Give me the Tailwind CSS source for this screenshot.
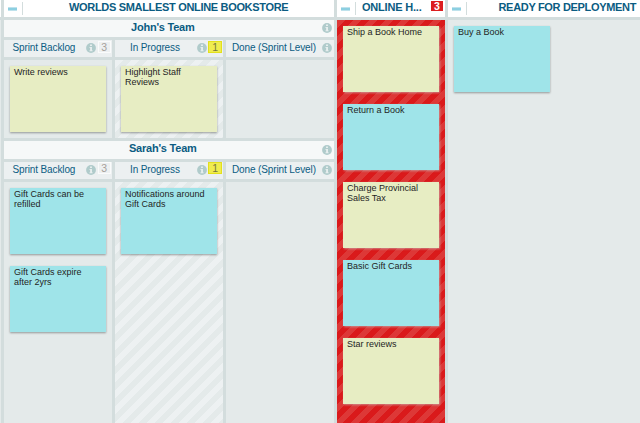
<!DOCTYPE html>
<html lang="en">
<head>
<meta charset="utf-8">
<title>Board</title>
<script src="https://cdn.jsdelivr.net/npm/@tailwindcss/browser@4"></script>
</head>
<body class="w-[640px] h-[423px] overflow-hidden bg-[#d3dddd] font-['Liberation_Sans',Arial,sans-serif] text-[#0b5c82]">
<svg width="0" height="0" class="absolute">
  <symbol id="info" viewBox="0 0 10 10">
    <circle cx="5" cy="5" r="4.9" fill="#b0cbcb"/>
    <path d="M4 1.6h2v1.4H4zM3.5 4h2.5v3.2h.6v1H3.5v-1h.6V5h-.6z" fill="#e6eeee"/>
  </symbol>
</svg>
<main class="flex h-full gap-[3px]">
  <div class="w-px shrink-0 flex flex-col gap-[3px]"><div class="h-[17px] bg-white"></div><div class="flex-1 bg-[#e4eaea]"></div></div>

  <section class="w-[330px] shrink-0 flex flex-col gap-[3px]">
    <header class="h-[17px] shrink-0 bg-white flex">
      <div class="w-[19px] h-[13px] mt-[2px] border-r border-[#d3dddd] pl-1 pt-[5px]"><div class="w-[9px] h-[4px] bg-[#8ccfe1] border-y border-[#bfe2ec]"></div></div>
      <h1 class="flex-1 pl-[46px] text-[11px] tracking-[-0.32px] leading-[15px] font-bold whitespace-nowrap">WORLDS SMALLEST ONLINE BOOKSTORE</h1>
    </header>

    <h2 class="h-[17px] shrink-0 bg-[#f6f8f8] flex items-start pl-[127px] pr-[2px] justify-between text-[11px] tracking-[-0.22px] leading-[15px] font-bold">John's Team<svg class="size-[10px] mt-[3px]"><use href="#info"/></svg></h2>
    <div class="h-[17px] shrink-0 grid grid-cols-3 gap-[3px] text-[10px] tracking-[-0.12px] leading-[16px] whitespace-nowrap">
      <div class="bg-[#ecf0f1] flex pl-[8.5px] pr-px"><span class="w-[73px]">Sprint Backlog</span><svg class="size-[10px] mt-[3px]"><use href="#info"/></svg><b class="ml-[2px] mt-px w-[13px] h-[12px] shrink-0 border border-[#fafbfb] bg-[#edf0f1] text-[#a5a09b] text-[10.5px] leading-[10px] text-center font-normal">3</b></div>
      <div class="bg-[#ecf0f1] flex pl-[15px]"><span class="w-[67px]">In Progress</span><svg class="size-[10px] mt-[3px]"><use href="#info"/></svg><b class="ml-px mt-px w-[14px] h-[12px] shrink-0 border border-[#e3e01c] bg-[#efec4e] text-[#77773f] text-[10.5px] leading-[10px] text-center font-normal">1</b></div>
      <div class="bg-[#ecf0f1] flex pl-[6px]"><span class="w-[90px]">Done (Sprint Level)</span><svg class="size-[10px] mt-[3px]"><use href="#info"/></svg></div>
    </div>
    <div class="h-[78px] shrink-0 grid grid-cols-3 gap-[3px] text-[9px] leading-[10px] text-[#242424]">
      <div class="bg-[#e4eaea] p-[6px]"><article class="w-[96px] h-[66px] bg-[#e7edc3] shadow-[0_1px_2px_#0000005c] px-1 pt-px">Write reviews</article></div>
      <div class="p-[6px] bg-[#e4eaea] bg-[linear-gradient(135deg,#edf1f2_25%,transparent_25%,transparent_50%,#edf1f2_50%,#edf1f2_75%,transparent_75%)] bg-[length:16px_16px]"><article class="w-[96px] h-[66px] bg-[#e7edc3] shadow-[0_1px_2px_#0000005c] px-1 pt-px">Highlight Staff<br>Reviews</article></div>
      <div class="bg-[#e4eaea]"></div>
    </div>

    <h2 class="h-[18px] shrink-0 bg-[#f6f8f8] flex items-start pl-[125px] pr-[2px] justify-between text-[11px] tracking-[-0.22px] leading-[15px] font-bold">Sarah's Team<svg class="size-[10px] mt-[4px]"><use href="#info"/></svg></h2>
    <div class="h-[17px] shrink-0 grid grid-cols-3 gap-[3px] text-[10px] tracking-[-0.12px] leading-[16px] whitespace-nowrap">
      <div class="bg-[#ecf0f1] flex pl-[8.5px] pr-px"><span class="w-[73px]">Sprint Backlog</span><svg class="size-[10px] mt-[3px]"><use href="#info"/></svg><b class="ml-[2px] w-[13px] h-[12px] shrink-0 border border-[#fafbfb] bg-[#edf0f1] text-[#a5a09b] text-[10.5px] leading-[10px] text-center font-normal">3</b></div>
      <div class="bg-[#ecf0f1] flex pl-[15px]"><span class="w-[67px]">In Progress</span><svg class="size-[10px] mt-[3px]"><use href="#info"/></svg><b class="ml-px w-[14px] h-[12px] shrink-0 border border-[#e3e01c] bg-[#efec4e] text-[#77773f] text-[10.5px] leading-[10px] text-center font-normal">1</b></div>
      <div class="bg-[#ecf0f1] flex pl-[6px]"><span class="w-[90px]">Done (Sprint Level)</span><svg class="size-[10px] mt-[3px]"><use href="#info"/></svg></div>
    </div>
    <div class="flex-1 grid grid-cols-3 gap-[3px] text-[9px] leading-[10px] text-[#242424]">
      <div class="bg-[#e4eaea] p-[6px] flex flex-col gap-3">
        <article class="w-[96px] h-[66px] bg-[#9fe4e9] shadow-[0_1px_2px_#0000005c] px-1 pt-px">Gift Cards can be<br>refilled</article>
        <article class="w-[96px] h-[66px] bg-[#9fe4e9] shadow-[0_1px_2px_#0000005c] px-1 pt-px">Gift Cards expire<br>after 2yrs</article>
      </div>
      <div class="p-[6px] bg-[#e4eaea] bg-[linear-gradient(135deg,#edf1f2_25%,transparent_25%,transparent_50%,#edf1f2_50%,#edf1f2_75%,transparent_75%)] bg-[length:16px_16px]"><article class="w-[96px] h-[66px] bg-[#9fe4e9] shadow-[0_1px_2px_#0000005c] px-1 pt-px">Notifications around<br>Gift Cards</article></div>
      <div class="bg-[#e4eaea]"></div>
    </div>
  </section>

  <section class="w-[108px] shrink-0 flex flex-col gap-[3px]">
    <header class="h-[17px] shrink-0 bg-white flex">
      <div class="w-[19px] h-[13px] mt-[2px] border-r border-[#d3dddd] pl-1 pt-[5px]"><div class="w-[9px] h-[4px] bg-[#8ccfe1] border-y border-[#bfe2ec]"></div></div>
      <h1 class="w-[75px] pl-[6px] text-[11px] tracking-[-0.2px] leading-[15px] font-bold whitespace-nowrap">ONLINE H...</h1>
      <b class="w-[12px] h-[10px] mt-px bg-[#dc1e20] text-white text-[10.5px] leading-[10px] text-center">3</b>
    </header>
    <div class="flex-1 p-[6px] flex flex-col gap-3 text-[9px] leading-[10px] text-[#242424] bg-[#da1a1b] bg-[linear-gradient(135deg,#dd3837_25%,transparent_25%,transparent_50%,#dd3837_50%,#dd3837_75%,transparent_75%)] bg-[length:16px_16px]">
      <article class="w-[96px] h-[66px] bg-[#e7edc3] shadow-[1px_1px_2px_#c8b4b4b0] px-1 pt-px">Ship a Book Home</article>
      <article class="w-[96px] h-[66px] bg-[#9fe4e9] shadow-[1px_1px_2px_#c8b4b4b0] px-1 pt-px">Return a Book</article>
      <article class="w-[96px] h-[66px] bg-[#e7edc3] shadow-[1px_1px_2px_#c8b4b4b0] px-1 pt-px">Charge Provincial<br>Sales Tax</article>
      <article class="w-[96px] h-[66px] bg-[#9fe4e9] shadow-[1px_1px_2px_#c8b4b4b0] px-1 pt-px">Basic Gift Cards</article>
      <article class="w-[96px] h-[66px] bg-[#e7edc3] shadow-[1px_1px_2px_#c8b4b4b0] px-1 pt-px">Star reviews</article>
    </div>
  </section>

  <section class="flex-1 min-w-0 flex flex-col gap-[3px]">
    <header class="h-[17px] shrink-0 bg-white flex">
      <div class="w-[19px] shrink-0 h-[13px] mt-[2px] border-r border-[#d3dddd] pl-1 pt-[5px]"><div class="w-[9px] h-[4px] bg-[#8ccfe1] border-y border-[#bfe2ec]"></div></div>
      <h1 class="pl-[31.5px] text-[11px] tracking-[-0.32px] leading-[15px] font-bold whitespace-nowrap">READY FOR DEPLOYMENT</h1>
    </header>
    <div class="flex-1 bg-[#e4eaea] p-[6px] text-[9px] leading-[10px] text-[#242424]">
      <article class="w-[96px] h-[66px] bg-[#9fe4e9] shadow-[0_1px_2px_#0000005c] px-1 pt-px">Buy a Book</article>
    </div>
  </section>
</main>
</body>
</html>
